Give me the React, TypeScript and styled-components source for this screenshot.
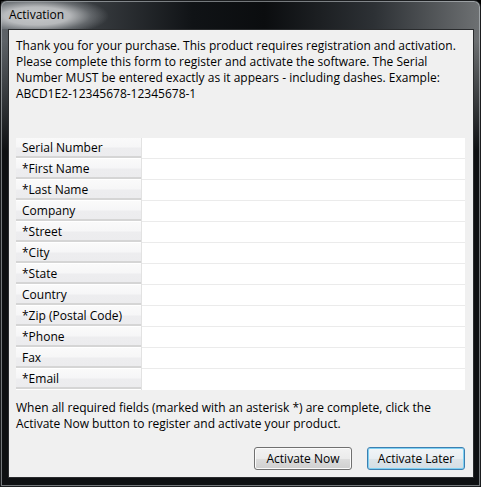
import React from "react";
import styled, { createGlobalStyle, css } from "styled-components";

const GlobalStyle = createGlobalStyle`
  html, body { margin: 0; padding: 0; background: #000; }
  body { font-family: "Open Sans", "Noto Sans", sans-serif; }
  * { box-sizing: border-box; }
`;

const Window = styled.div`
  width: 481px;
  height: 487px;
  display: flex;
  flex-direction: column;
  padding: 0 6px 8px 7px;
  border-radius: 7px 7px 0 0;
  border: 1px solid #1b1d1f;
  box-shadow: inset 0 0 0 1px rgba(200, 205, 210, 0.55);
  background:
    linear-gradient(to bottom, rgba(14, 16, 18, 0) 0px, rgba(14, 16, 18, 0) 40px, #0e1012 150px),
    linear-gradient(90deg, #5e6368 0%, #3a3e42 18%, #101316 40%, #0b0d0f 55%, #2d3135 78%, #6e7173 100%);
`;

const TitleBar = styled.div`
  height: 28px;
  display: flex;
  align-items: center;
  margin-left: -7px;
  padding-left: 8px;
  background: radial-gradient(
    ellipse 72px 20px at 36px 15px,
    rgba(204, 206, 208, 0.95) 0%,
    rgba(198, 200, 202, 0.88) 45%,
    rgba(150, 154, 158, 0.45) 75%,
    rgba(120, 124, 128, 0) 100%
  );
`;

const TitleText = styled.span`
  font-size: 12px;
  color: #000;
  line-height: 16px;
`;

const Content = styled.div`
  flex: 1;
  display: flex;
  flex-direction: column;
  background: #f0f0f0;
  border: 1px solid #2a2c2e;
  padding: 8px 8px 7px 7px;
  font-size: 12px;
  line-height: 16px;
  color: #000;
`;

const Paragraph = styled.p`
  margin: 0;
  white-space: nowrap;
`;

const FormTable = styled.div`
  margin-top: 36px;
  background: #fff;
  display: flex;
  flex-direction: column;
`;

const Row = styled.div`
  display: grid;
  grid-template-columns: 125px 1px 1fr;
  height: 21px;
`;

const Label = styled.div`
  padding-left: 6px;
  line-height: 20px;
  white-space: nowrap;
  background: linear-gradient(
    to bottom,
    #fafafa 0px,
    #f6f6f7 9px,
    #ededef 10px,
    #ececee 18px,
    #d5d5d5 18px,
    #d5d5d5 20px,
    #ffffff 20px
  );
`;

const Divider = styled.div`
  background: #e2e2e2;
`;

const Field = styled.div<{ $last?: boolean }>`
  background: #fff;
  ${(p) =>
    !p.$last &&
    css`
      border-bottom: 1px solid #ebebeb;
    `}
`;

const Footer = styled(Paragraph)`
  margin-top: 10px;
`;

const ButtonRow = styled.div`
  margin-top: auto;
  display: flex;
  justify-content: flex-end;
  gap: 15px;
`;

const Button = styled.button<{ $default?: boolean }>`
  width: 98px;
  height: 23px;
  font-family: "Open Sans", "Noto Sans", sans-serif;
  font-size: 12px;
  color: #000;
  padding: 0;
  border-radius: 3px;
  border: 1px solid #707070;
  background: linear-gradient(to bottom, #f2f2f2 0%, #ebebeb 50%, #dddddd 51%, #cfcfcf 100%);
  box-shadow: inset 0 0 0 1px #fbfbfb;
  ${(p) =>
    p.$default &&
    css`
      border-color: #3c7fb1;
      background: linear-gradient(to bottom, #f1f5f8 0%, #e8eef2 50%, #dde5ea 51%, #d3dde4 100%);
      box-shadow: inset 0 0 0 1px #7fd0f2;
    `}
`;

const fields = [
  "Serial Number",
  "*First Name",
  "*Last Name",
  "Company",
  "*Street",
  "*City",
  "*State",
  "Country",
  "*Zip (Postal Code)",
  "*Phone",
  "Fax",
  "*Email",
];

export default function App() {
  return (
    <>
      <GlobalStyle />
      <Window>
        <TitleBar>
          <TitleText>Activation</TitleText>
        </TitleBar>
        <Content>
          <Paragraph>
            Thank you for your purchase. This product requires registration and activation.
            <br />
            Please complete this form to register and activate the software. The Serial
            <br />
            Number MUST be entered exactly as it appears - including dashes. Example:
            <br />
            ABCD1E2-12345678-12345678-1
          </Paragraph>
          <FormTable>
            {fields.map((f, i) => (
              <Row key={f}>
                <Label>{f}</Label>
                <Divider />
                <Field $last={i === fields.length - 1} />
              </Row>
            ))}
          </FormTable>
          <Footer>
            When all required fields (marked with an asterisk *) are complete, click the
            <br />
            Activate Now button to register and activate your product.
          </Footer>
          <ButtonRow>
            <Button>Activate Now</Button>
            <Button $default>Activate Later</Button>
          </ButtonRow>
        </Content>
      </Window>
    </>
  );
}
